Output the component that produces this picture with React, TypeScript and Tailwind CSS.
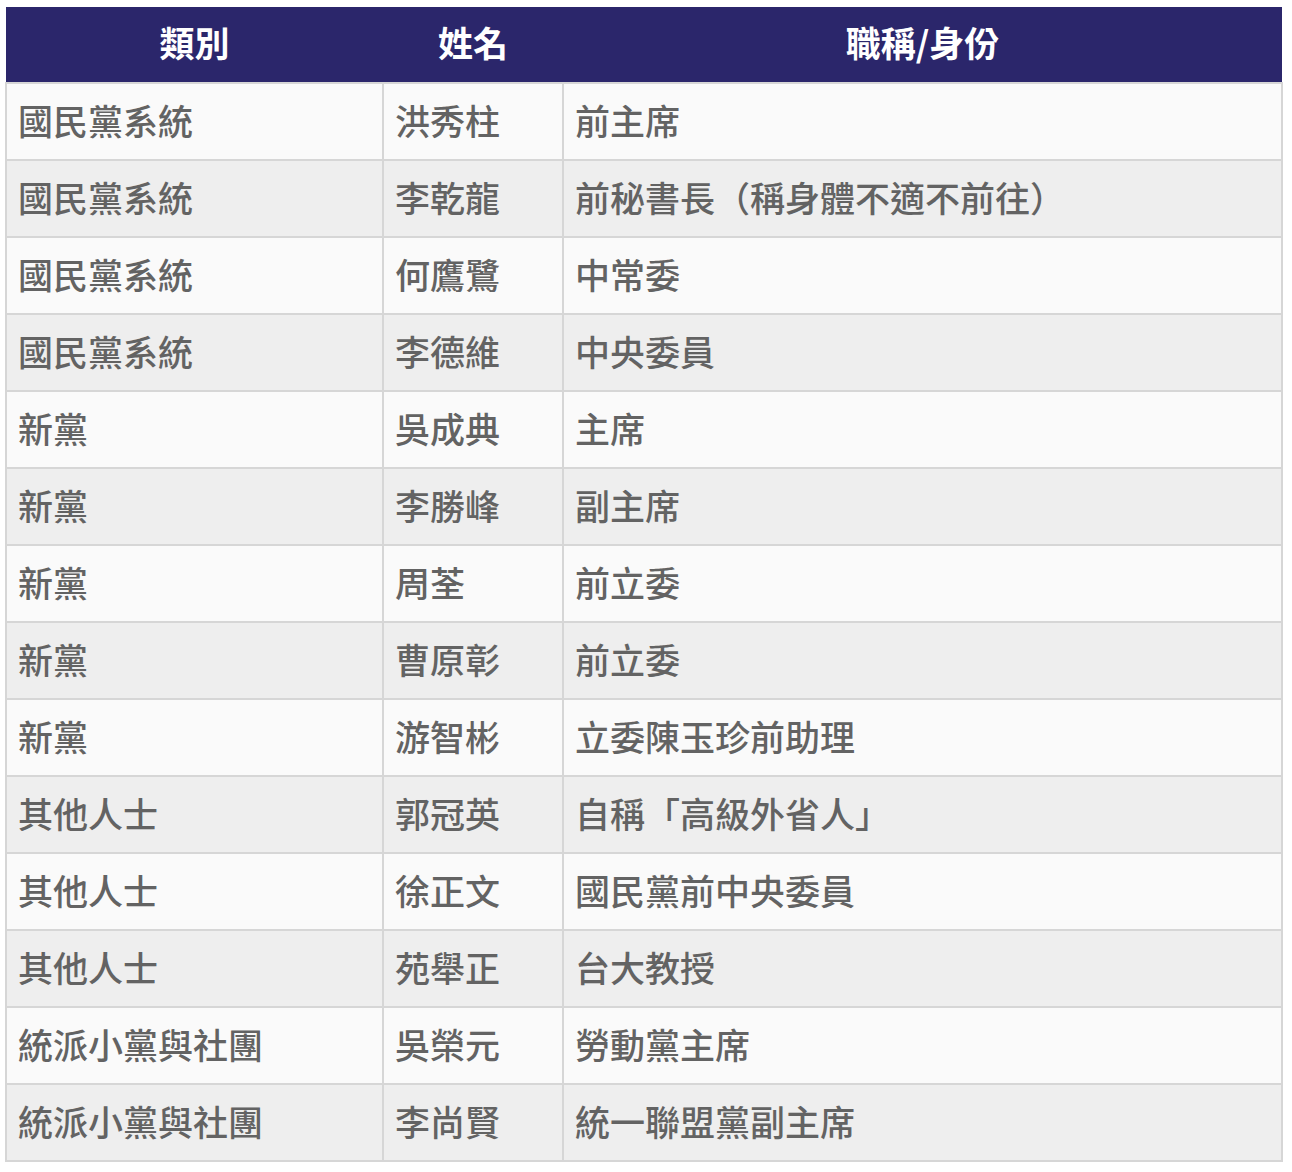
const rows: [string, string, string][] = [
  ['國民黨系統', '洪秀柱', '前主席'],
  ['國民黨系統', '李乾龍', '前秘書長（稱身體不適不前往）'],
  ['國民黨系統', '何鷹鷺', '中常委'],
  ['國民黨系統', '李德維', '中央委員'],
  ['新黨', '吳成典', '主席'],
  ['新黨', '李勝峰', '副主席'],
  ['新黨', '周荃', '前立委'],
  ['新黨', '曹原彰', '前立委'],
  ['新黨', '游智彬', '立委陳玉珍前助理'],
  ['其他人士', '郭冠英', '自稱「高級外省人」'],
  ['其他人士', '徐正文', '國民黨前中央委員'],
  ['其他人士', '苑舉正', '台大教授'],
  ['統派小黨與社團', '吳榮元', '勞動黨主席'],
  ['統派小黨與社團', '李尚賢', '統一聯盟黨副主席'],
];

export default function App() {
  return (
    <div
      className="w-[1292px] h-[1172px] bg-white pt-[7px] pl-[5px]"
      style={{ fontFamily: '"Noto Sans CJK TC", "Noto Sans", sans-serif' }}
    >
      <table className="w-[1276px] border-collapse table-fixed">
        <colgroup>
          <col className="w-[377px]" />
          <col className="w-[180px]" />
          <col className="w-[719px]" />
        </colgroup>
        <thead>
          <tr className="h-[76px] bg-[#2b266b] text-white text-[35px] font-black">
            <th className="text-center pb-[4px]">類別</th>
            <th className="text-center pb-[4px]">姓名</th>
            <th className="text-center pb-[4px]">職稱/身份</th>
          </tr>
        </thead>
        <tbody>
          {rows.map((r, i) => (
            <tr
              key={i}
              className={`h-[77px] text-[35px] font-medium text-[#636363] ${i % 2 === 0 ? 'bg-[#fafafa]' : 'bg-[#eeeeee]'}`}
            >
              {r.map((c, j) => (
                <td
                  key={j}
                  className="border-2 border-[#d6d6d6] pl-[11px] pb-[4px] leading-none whitespace-nowrap"
                >
                  {c}
                </td>
              ))}
            </tr>
          ))}
        </tbody>
      </table>
    </div>
  );
}
